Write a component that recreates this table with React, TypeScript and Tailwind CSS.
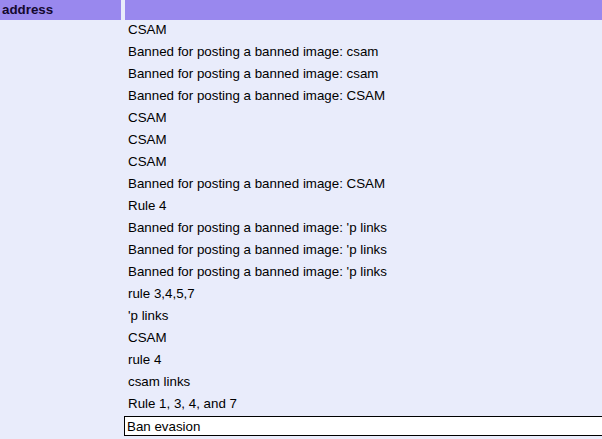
const reasons = [
  "CSAM",
  "Banned for posting a banned image: csam",
  "Banned for posting a banned image: csam",
  "Banned for posting a banned image: CSAM",
  "CSAM",
  "CSAM",
  "CSAM",
  "Banned for posting a banned image: CSAM",
  "Rule 4",
  "Banned for posting a banned image: 'p links",
  "Banned for posting a banned image: 'p links",
  "Banned for posting a banned image: 'p links",
  "rule 3,4,5,7",
  "'p links",
  "CSAM",
  "rule 4",
  "csam links",
  "Rule 1, 3, 4, and 7",
];

const App = () => {
  return (
    <div
      className="w-[602px] h-[439px] overflow-hidden bg-[#e9ecfb] text-[13.33px] text-black"
      style={{ fontFamily: '"Liberation Sans", Arial, sans-serif' }}
    >
      {/* Header */}
      <div className="flex gap-[4px] h-[20px]">
        <div className="w-[121px] shrink-0 bg-[#9988ee] px-[2px] font-bold leading-[20px] text-[#14082e]">
          address
        </div>
        <div className="flex-1 bg-[#9988ee]" />
      </div>

      {/* Body */}
      <div className="flex gap-[4px]">
        <div className="w-[121px] shrink-0" />
        <div className="flex-1 min-w-0 flex flex-col">
          {reasons.map((reason, index) => (
            <div key={index} className="h-[22px] pt-[2px] pl-[3px] leading-[15px] whitespace-nowrap">
              {reason}
            </div>
          ))}
          <div className="h-[22px] whitespace-nowrap">
            <input
              type="text"
              defaultValue="Ban evasion"
              className="w-[520px] h-[20px] -ml-[1px] border border-black bg-white px-[2px] text-[13.33px] leading-[18px] text-black outline-none"
              style={{ fontFamily: '"Liberation Sans", Arial, sans-serif' }}
            />
          </div>
        </div>
      </div>
    </div>
  );
};

export default App;
